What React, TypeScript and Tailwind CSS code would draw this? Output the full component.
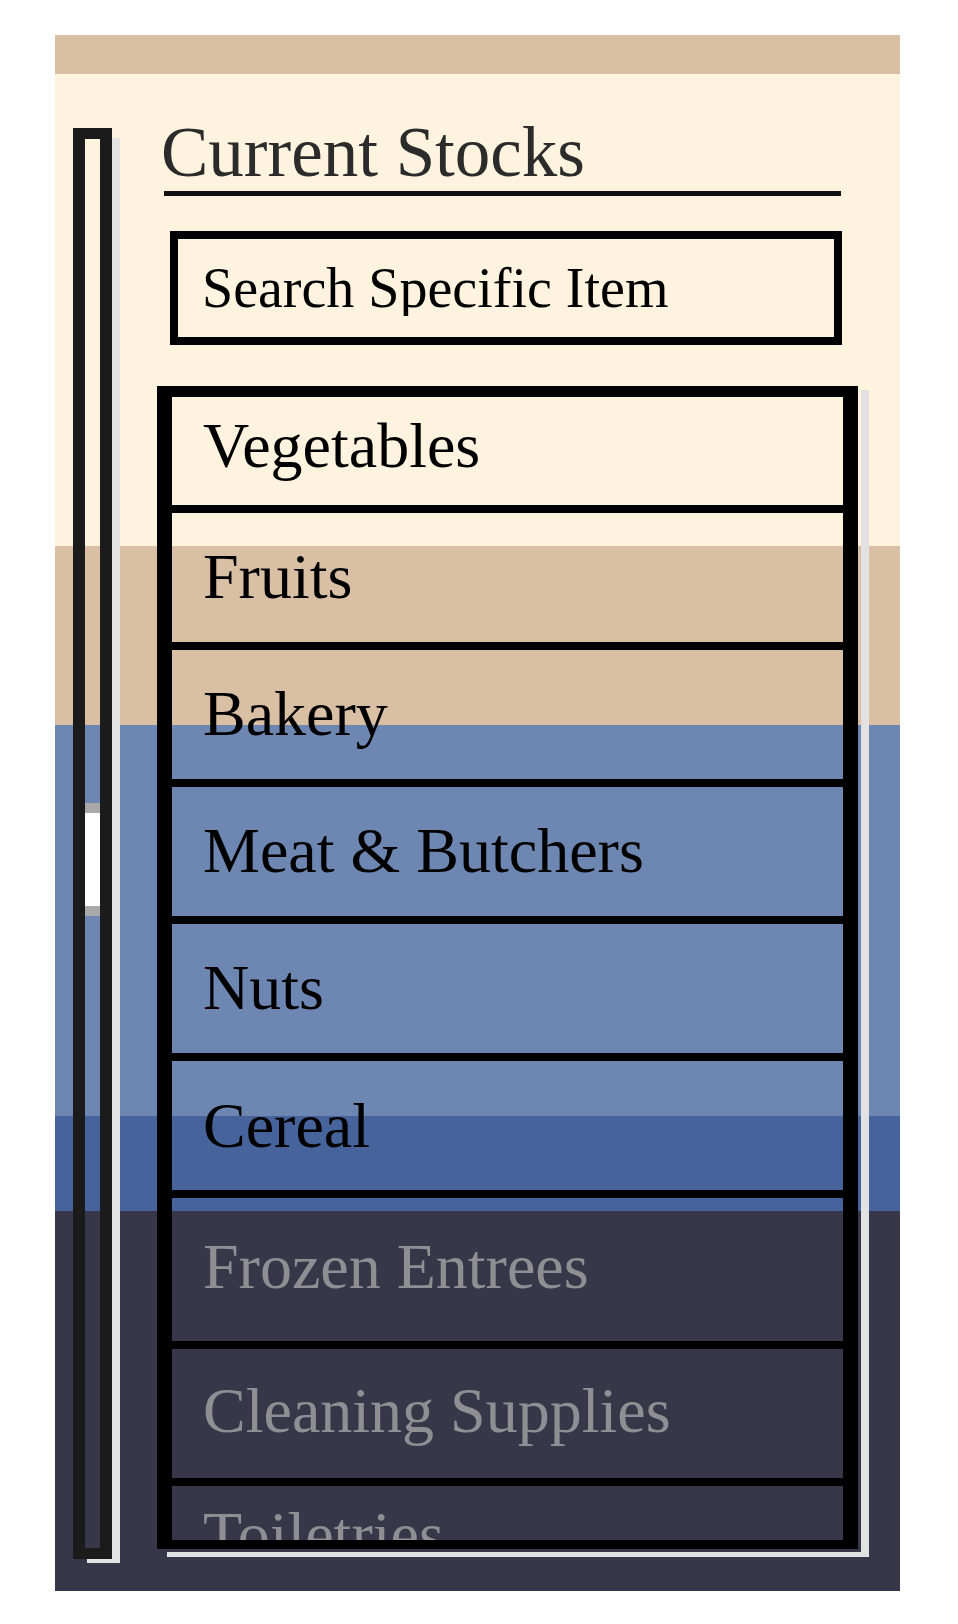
import React from "react";

type Row = { label: string; cls: string; dim?: boolean };

const rows: Row[] = [
  { label: "Vegetables", cls: "h-[116px] pt-[17px]" },
  { label: "Fruits", cls: "h-[137px] pt-[32px]" },
  { label: "Bakery", cls: "h-[137px] pt-[32px]" },
  { label: "Meat & Butchers", cls: "h-[137px] pt-[32px]" },
  { label: "Nuts", cls: "h-[137px] pt-[32px]" },
  { label: "Cereal", cls: "h-[137px] pt-[33px]" },
  { label: "Frozen Entrees", cls: "h-[151px] pt-[37px]", dim: true },
  { label: "Cleaning Supplies", cls: "h-[137px] pt-[30px]", dim: true },
  { label: "Toiletries", cls: "h-[137px] pt-[17px]", dim: true },
];

export default function App() {
  return (
    <div className="min-h-screen bg-white pt-[35px] pl-[55px] font-['Liberation_Serif',serif]">
      <div className="w-[845px] h-[1556px] bg-[linear-gradient(to_bottom,#d9c0a5_39px,#fdf3de_39px,#fdf3de_511px,#d9c0a5_511px,#d9c0a5_690px,#6e86b2_690px,#6e86b2_1081px,#46639b_1081px,#46639b_1176px,#373749_1176px)] pt-[82px] pl-[18px] flex items-start">
        {/* scrollbar */}
        <div className="mt-[11px] w-[39px] h-[1431px] shrink-0 border-l-[12px] border-r-[12px] border-t-[11px] border-b-[11px] border-[#1b1b1b] shadow-[11px_7px_0_-3px_#e3e3e3] flex flex-col">
          <div className="mt-[664px] h-[113px] flex flex-col">
            <div className="h-[10px] bg-[#a9a9a9]" />
            <div className="h-[93px] bg-white" />
            <div className="h-[10px] bg-[#a9a9a9]" />
          </div>
        </div>

        {/* main column */}
        <div className="ml-[45px] flex flex-col">
          <h1 className="ml-[4px] text-[71px] leading-none text-[#2b2b2b] font-normal whitespace-nowrap">
            Current Stocks
          </h1>
          <div className="mt-[3px] ml-[7px] w-[677px] h-[5px] bg-[#111]" />

          <div className="mt-[35px] ml-[13px] w-[672px] h-[114px] border-[8px] border-black pl-[24px] flex items-center">
            <input
              type="text"
              placeholder="Search Specific Item"
              className="w-full h-[56px] bg-transparent outline-none text-[56px] leading-none text-black placeholder:text-black font-['Liberation_Serif',serif]"
            />
          </div>

          <div className="mt-[41px] flex w-fit">
            <div className="ml-[10px] mt-[4px] flex w-fit pr-[3px] pb-[3px] border-r-[8px] border-b-[5px] border-[#e2e2e2]">
              <div className="-ml-[10px] -mt-[4px] w-[701px] h-[1163px] shrink-0 border-l-[15px] border-r-[15px] border-t-[11px] border-b-[9px] border-black flex flex-col overflow-hidden">
                {rows.map((r) => (
                  <div
                    key={r.label}
                    className={`${r.cls} shrink-0 border-b-[8px] border-black pl-[31px] text-[64px] leading-none whitespace-nowrap ${
                      r.dim ? "text-[#8f8f93]" : "text-black"
                    }`}
                  >
                    {r.label}
                  </div>
                ))}
              </div>
            </div>
          </div>
        </div>
      </div>
    </div>
  );
}
